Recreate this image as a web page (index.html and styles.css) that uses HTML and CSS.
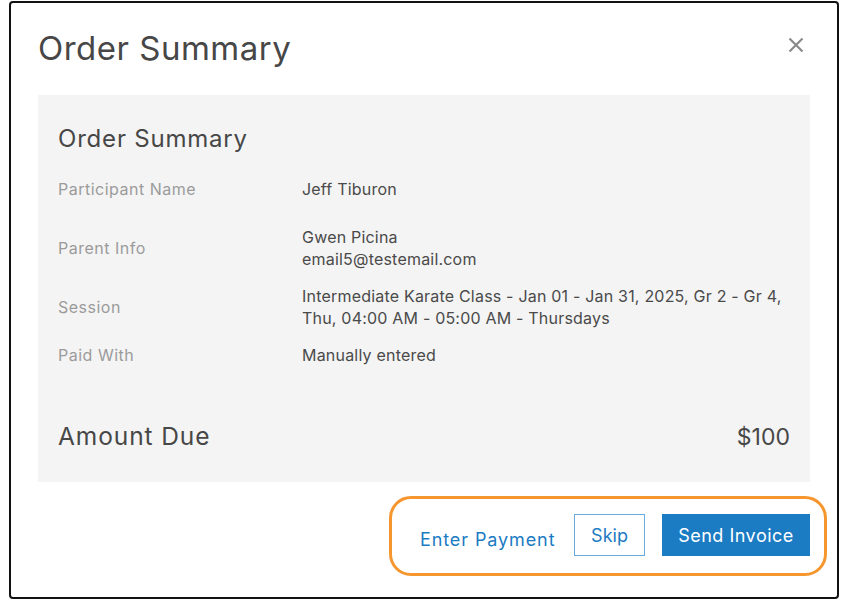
FILE: index.html
```html
<!DOCTYPE html>
<html lang="en">
<head>
<meta charset="utf-8">
<title>Order Summary</title>
<link rel="stylesheet" href="styles.css">
</head>
<body>
<div class="modal">
  <div class="modal-header">
    <h1 class="modal-title">Order Summary</h1>
    <button class="close" aria-label="Close">
      <svg width="16" height="16" viewBox="0 0 16 16"><path d="M1.5 1.5 L14.5 14.5 M14.5 1.5 L1.5 14.5" stroke="#8a8a8a" stroke-width="2.2" stroke-linecap="butt" fill="none"/></svg>
    </button>
  </div>
  <div class="panel">
    <h2 class="panel-title">Order Summary</h2>
    <div class="rows">
      <div class="row first">
        <div class="label">Participant Name</div>
        <div class="value">Jeff Tiburon</div>
      </div>
      <div class="row">
        <div class="label">Parent Info</div>
        <div class="value">Gwen Picina<br>email5@testemail.com</div>
      </div>
      <div class="row">
        <div class="label">Session</div>
        <div class="value">Intermediate Karate Class - Jan 01 - Jan 31, 2025, Gr 2 - Gr 4,<br>Thu, 04:00 AM - 05:00 AM - Thursdays</div>
      </div>
      <div class="row">
        <div class="label">Paid With</div>
        <div class="value">Manually entered</div>
      </div>
    </div>
    <div class="amount">
      <span class="amount-label">Amount Due</span>
      <span class="amount-value">$100</span>
    </div>
  </div>
  <div class="footer">
    <div class="actions">
      <a class="link" href="#">Enter Payment</a>
      <button class="btn btn-outline">Skip</button>
      <button class="btn btn-primary">Send Invoice</button>
    </div>
  </div>
</div>
</body>
</html>
```

FILE: styles.css
```css
* { box-sizing: border-box; }
html, body { margin: 0; padding: 0; background: #fff; }
body {
  font-family: Inter, "Liberation Sans", sans-serif;
  color: #444;
}
.modal {
  margin: 1px 9px 0 9px;
  height: 598px;
  border: 2px solid #111;
  border-radius: 4px;
  background: #fff;
  display: flex;
  flex-direction: column;
}
.modal-header {
  display: flex;
  justify-content: space-between;
  align-items: flex-start;
  padding: 27px 33px 0 27px;
  height: 92px;
}
.modal-title {
  margin: 0;
  font-size: 33px;
  font-weight: 400;
  letter-spacing: 0.5px;
  line-height: 36px;
  color: #474747;
}
.close {
  background: none;
  border: 0;
  padding: 0;
  margin-top: 7px;
  width: 16px;
  height: 16px;
  display: flex;
}
.panel {
  margin: 0 27px;
  background: #f4f4f4;
  padding: 30px 20px 32px 20px;
}
.panel-title {
  margin: 0 0 25px 0;
  font-size: 24px;
  font-weight: 400;
  letter-spacing: 0.8px;
  line-height: 28px;
  color: #474747;
}
.rows {
  display: flex;
  flex-direction: column;
  gap: 15px;
}
.row {
  display: grid;
  grid-template-columns: 244px 1fr;
  align-items: center;
  font-size: 16px;
  line-height: 22px;
}
.row.first { margin-bottom: 11px; }
.label { color: #9b9b9b; letter-spacing: 0.5px; }
.value { color: #4a4a4a; letter-spacing: 0.2px; }
.amount {
  margin-top: 57px;
  display: flex;
  justify-content: space-between;
  align-items: baseline;
  line-height: 26px;
  color: #474747;
}
.amount-label { font-size: 24.5px; letter-spacing: 0.9px; }
.amount-value { font-size: 23px; }
.footer {
  display: flex;
  justify-content: flex-end;
  padding: 14px 10px 0 0;
}
.actions {
  display: flex;
  align-items: center;
  gap: 17px;
  width: 438px;
  height: 80px;
  border: 3px solid #f5962e;
  border-radius: 22px;
  padding: 0 14px 0 28px;
}
.link {
  color: #1b7bc3;
  text-decoration: none;
  font-size: 18px;
  letter-spacing: 0.9px;
  margin-top: 6px;
  flex: 1;
  white-space: nowrap;
}
.btn {
  font-family: inherit;
  font-size: 18px;
  height: 42px;
  margin-top: -2px;
  border-radius: 0;
  cursor: pointer;
  padding: 0;
}
.btn-outline {
  width: 71px;
  background: #fff;
  color: #1b7bc3;
  border: 1px solid #6aa9dc;
}
.btn-primary {
  width: 148px;
  background: #1b7bc3;
  color: #fff;
  border: 0;
  letter-spacing: 0.5px;
}
```
